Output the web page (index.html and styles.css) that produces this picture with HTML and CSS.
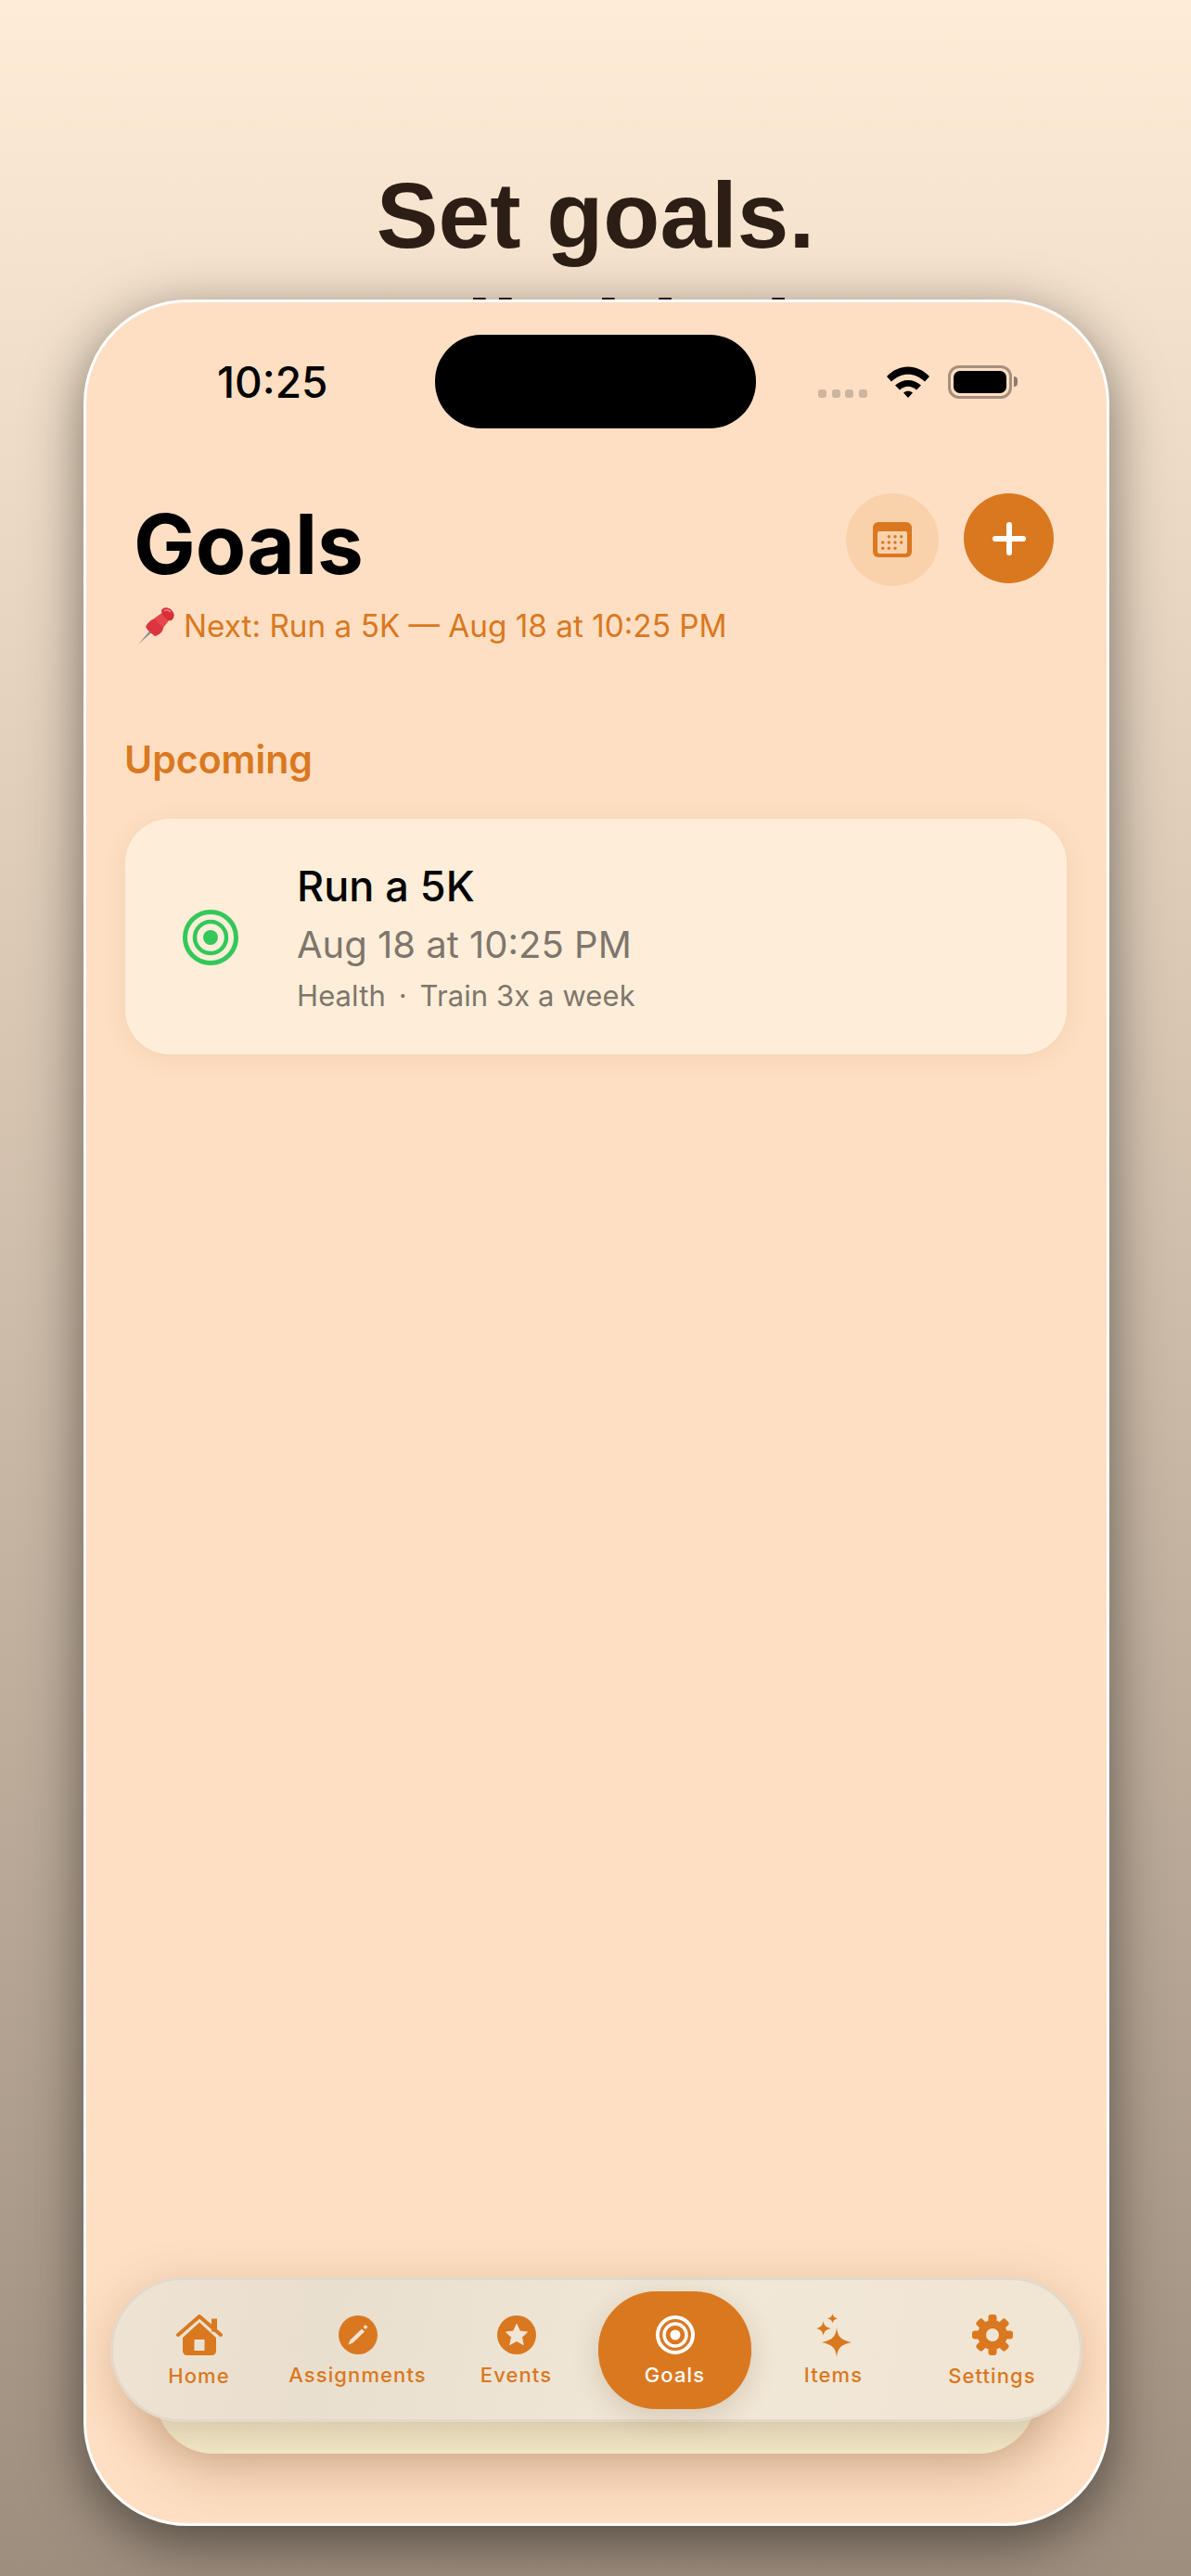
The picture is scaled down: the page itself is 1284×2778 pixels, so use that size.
FILE: index.html
```html
<!DOCTYPE html>
<html>
<head>
    <title>Goals</title>
    <link rel="stylesheet" href="styles.css">
</head>
<body>
    <div class="headline">
        <h1>Set goals.</h1>
        <h1>Actually hit them.</h1>
    </div>

    <div class="phone">
        <div class="status">
            <span class="time">10:25</span>
            <div class="island"></div>
            <div class="status-icons">
                <div class="signal"><i></i><i></i><i></i><i></i></div>
                <svg class="wifi" width="46" height="34" viewBox="0 0 46 34">
                    <path d="M0 11C13 -3 33 -3 46 11L41 16.500C30 6 16 6 5 16.500Z"/>
                    <path d="M9 20.500C17 13 29 13 37 20.500L32 25.500C26 20.500 20 20.500 14 25.500Z"/>
                    <path d="M18 28.500C21 26 25 26 28 28.500L23 34Z"/>
                </svg>
                <div class="battery"><div class="battery-fill"></div></div>
                <div class="battery-cap"></div>
            </div>
        </div>

        <div class="header">
            <div>
                <div class="title">Goals</div>
                <div class="next">
                    <svg class="pin" width="40" height="40" viewBox="0 0 40 40">
                        <path d="M0 40L14 23.500L16 25.500Z" fill="#7f8c9c"/>
                        <path d="M8 21C11 15 17 11 21 12L27 20C28 25 23 30 18 31C14 28 10 25 8 21Z" fill="#dc3540"/>
                        <path d="M17 12L27 5L34 13L27 22Z" fill="#e5474d"/>
                        <path d="M25 3C28 -1 33 0 36 3C40 7 39 11 36 14C33 15 30 13 28 10C26 8 25 6 25 3Z" fill="#d92f38"/>
                        <path d="M28 4C30 2 33 3 35 5" fill="none" stroke="#f58a8a" stroke-width="1.500"/>
                    </svg>
                    <span>Next: Run a 5K — Aug 18 at 10:25 PM</span>
                </div>
            </div>
            <div class="header-btns">
                <div class="btn btn-cal">
                    <svg width="42" height="38" viewBox="0 0 42 38">
                        <rect width="42" height="38" rx="6" fill="#da7820"/>
                        <rect x="5" y="10" width="32" height="24" rx="2" fill="#f9d2ac"/>
                        <g fill="#da7820">
                            <circle cx="17.300" cy="15.700" r="1.700"/><circle cx="24" cy="15.700" r="1.700"/><circle cx="30.700" cy="15.700" r="1.700"/>
                            <circle cx="10.700" cy="22" r="1.700"/><circle cx="17.300" cy="22" r="1.700"/><circle cx="24" cy="22" r="1.700"/><circle cx="30.700" cy="22" r="1.700"/>
                            <circle cx="10.700" cy="28.300" r="1.700"/><circle cx="17.300" cy="28.300" r="1.700"/><circle cx="24" cy="28.300" r="1.700"/>
                        </g>
                    </svg>
                </div>
                <div class="btn btn-add">
                    <svg width="36" height="36" viewBox="0 0 36 36">
                        <path d="M18 3V33M3 18H33" stroke="#fff" stroke-width="6" stroke-linecap="round"/>
                    </svg>
                </div>
            </div>
        </div>

        <div class="section-label">Upcoming</div>

        <div class="card">
            <svg class="card-icon" width="60" height="60" viewBox="0 0 60 60">
                <circle cx="30" cy="30" r="27.500" fill="none" stroke="#34c759" stroke-width="5"/>
                <circle cx="30" cy="30" r="17" fill="none" stroke="#34c759" stroke-width="4.500"/>
                <circle cx="30" cy="30" r="8" fill="#34c759"/>
            </svg>
            <div class="card-text">
                <div class="card-title">Run a 5K</div>
                <div class="card-date">Aug 18 at 10:25 PM</div>
                <div class="card-meta">Health <span class="dot">·</span> Train 3x a week</div>
            </div>
        </div>

        <div class="peek-card"></div>

        <div class="tabbar">
            <div class="tab">
                <svg width="50" height="44" viewBox="0 0 50 44">
                    <path fill-rule="evenodd" d="M7 25L25 8.500L43 25V39Q43 44 38 44H12Q7 44 7 39ZM19.500 27V39H30.500V27Z"/>
                    <path d="M2 22L25 2L48 22" fill="none" stroke="#da7820" stroke-width="4" stroke-linecap="round" stroke-linejoin="round"/>
                    <rect x="38" y="4.500" width="6" height="14"/>
                </svg>
                <span>Home</span>
            </div>
            <div class="tab">
                <svg width="42" height="42" viewBox="0 0 42 42">
                    <circle cx="21" cy="21" r="21"/>
                    <path d="M10.500 31.500L12.500 26.500L25 14.500L28 17.500L15.500 29.500Z" fill="#f1e6d6"/>
                    <circle cx="29" cy="12.500" r="2" fill="#f1e6d6"/>
                </svg>
                <span>Assignments</span>
            </div>
            <div class="tab">
                <svg width="42" height="42" viewBox="0 0 42 42">
                    <circle cx="21" cy="21" r="21"/>
                    <path d="M21 9.500L24.500 17L32.500 18L26.500 23.500L28.200 31.500L21 27.500L13.800 31.500L15.500 23.500L9.500 18L17.500 17Z" fill="#f1e6d6" stroke="#f1e6d6" stroke-width="1" stroke-linejoin="round"/>
                </svg>
                <span>Events</span>
            </div>
            <div class="tab tab-active">
                <svg width="42" height="42" viewBox="0 0 42 42" fill="none" stroke="#fff">
                    <circle cx="21" cy="21" r="19" stroke-width="4"/>
                    <circle cx="21" cy="21" r="12" stroke-width="3.500"/>
                    <circle cx="21" cy="21" r="5.500" fill="#fff" stroke="none"/>
                </svg>
                <span>Goals</span>
            </div>
            <div class="tab tab-items">
                <svg width="38" height="47" viewBox="0 0 38 47">
                    <path d="M22 15C23 25 26.500 28.500 38 31C26.500 33.500 23 37 22 47C21 37 17.500 33.500 6 31C17.500 28.500 21 25 22 15Z"/>
                    <path d="M7.600 8C8.300 12.700 10.800 15.200 16 16C10.800 16.800 8.300 19.300 7.600 24C6.900 19.300 4.400 16.800 0 16C4.400 15.200 6.900 12.700 7.600 8Z"/>
                    <path d="M17.600 0C18.100 2.900 19.900 4.700 23 5.300C19.900 5.900 18.100 7.700 17.600 10.600C17.100 7.700 15.300 5.900 12 5.300C15.300 4.700 17.100 2.900 17.600 0Z"/>
                </svg>
                <span>Items</span>
            </div>
            <div class="tab">
                <svg width="44" height="44" viewBox="-22 -22 44 44">
                    <circle r="11.500" fill="none" stroke="#da7820" stroke-width="9"/>
                    <rect x="-4.500" y="-22" width="9" height="10" rx="3"/>
                    <rect x="-4.500" y="-22" width="9" height="10" rx="3" transform="rotate(45)"/>
                    <rect x="-4.500" y="-22" width="9" height="10" rx="3" transform="rotate(90)"/>
                    <rect x="-4.500" y="-22" width="9" height="10" rx="3" transform="rotate(135)"/>
                    <rect x="-4.500" y="-22" width="9" height="10" rx="3" transform="rotate(180)"/>
                    <rect x="-4.500" y="-22" width="9" height="10" rx="3" transform="rotate(225)"/>
                    <rect x="-4.500" y="-22" width="9" height="10" rx="3" transform="rotate(270)"/>
                    <rect x="-4.500" y="-22" width="9" height="10" rx="3" transform="rotate(315)"/>
                </svg>
                <span>Settings</span>
            </div>
        </div>
    </div>
</body>
</html>
```

FILE: styles.css
```css
html, body {
    height: 100%;
}
body {
    margin: 0;
    height: 2778px;
    overflow: hidden;
    background: linear-gradient(180deg, #ffecd6 0%, #9e8e7e 100%);
    font-family: "Inter", "Liberation Sans", sans-serif;
}

.headline {
    padding-top: 169px;
    height: 154px;
    text-align: center;
    font-family: "Liberation Sans", sans-serif;
}
.headline h1 {
    margin: 0;
    font-size: 100px;
    line-height: 127px;
    font-weight: 700;
    color: #2c1e15;
}

/* phone body */
.phone {
    position: relative;
    z-index: 1;
    box-sizing: border-box;
    width: 1106px;
    height: 2401px;
    margin: 0 0 0 90px;
    border: 3px solid #fff;
    border-radius: 112px;
    background: #fedfc3;
    box-shadow: 0 16px 60px rgba(0, 0, 0, 0.5);
    overflow: hidden;
}

.status {
    display: flex;
    align-items: center;
    height: 101px;
    margin-top: 35px;
    padding-left: 141px;
}
.time {
    width: 235px;
    font-size: 46px;
    font-weight: 500;
    color: #000;
}
.island {
    width: 346px;
    height: 101px;
    border-radius: 50px;
    background: #000;
}
.status-icons {
    display: flex;
    align-items: center;
    margin-left: 67px;
}
.signal {
    display: flex;
    gap: 5.5px;
    margin-top: 25px;
    margin-right: 21px;
}
.signal i {
    width: 9px;
    height: 9px;
    border-radius: 3px;
    background: #cdb5a0;
}
.wifi {
    fill: #000;
    margin-right: 20px;
}
.battery {
    box-sizing: border-box;
    width: 69px;
    height: 36px;
    padding: 3px;
    border: 3px solid #a68f7c;
    border-radius: 12px;
}
.battery-fill {
    height: 100%;
    border-radius: 7px;
    background: #000;
}
.battery-cap {
    width: 4px;
    height: 11px;
    margin-left: 2px;
    border-radius: 0 6px 6px 0;
    background: #8f7a68;
}

.header {
    display: flex;
    justify-content: space-between;
    margin-top: 72px;
    padding: 0 57px 0 51px;
}
.title {
    font-size: 89px;
    font-weight: 700;
    line-height: 106px;
    color: #000;
}
.next {
    display: flex;
    align-items: center;
    gap: 9px;
    height: 40px;
    margin-top: 15px;
    padding-left: 5px;
    font-size: 33.3px;
    color: #da7820;
}
.header-btns {
    display: flex;
    align-items: flex-start;
    gap: 27px;
    margin-top: -2px;
}
.btn {
    display: flex;
    align-items: center;
    justify-content: center;
    width: 100px;
    height: 100px;
    border-radius: 50%;
}
.btn-cal {
    background: #f9d2ac;
}
.btn-add {
    width: 97px;
    height: 97px;
    background: #da7820;
}

.section-label {
    margin: 100px 0 0 41px;
    font-size: 41px;
    font-weight: 600;
    line-height: 48px;
    color: #da7820;
}

.card {
    display: flex;
    align-items: center;
    box-sizing: border-box;
    width: 1015px;
    height: 254px;
    margin: 40px 0 0 42px;
    padding: 2px 0 0 62px;
    border-radius: 48px;
    background: #feeed9;
    box-shadow: 0 4px 24px rgba(160, 90, 30, 0.1);
}
.card-icon {
    flex: none;
}
.card-text {
    margin-left: 63px;
}
.card-title {
    font-size: 45px;
    font-weight: 500;
    line-height: 54px;
    color: #000;
}
.card-date {
    margin-top: 10px;
    font-size: 40px;
    line-height: 52px;
    color: #7e766c;
}
.card-meta {
    margin-top: 9px;
    font-size: 31px;
    line-height: 40px;
    letter-spacing: 0.1px;
    color: #7e766c;
}
.dot {
    margin: 0 5px;
}

/* floating bits at the bottom of the phone */
.peek-card {
    position: absolute;
    left: 75px;
    top: 2200px;
    width: 949px;
    height: 120px;
    border-radius: 0 0 62px 62px;
    background: linear-gradient(180deg, #dfd3b6 0%, #f4eccc 100%);
    box-shadow: 0 14px 60px rgba(110, 60, 20, 0.33);
}
.tabbar {
    position: absolute;
    left: 26px;
    top: 2130px;
    display: grid;
    grid-template-columns: repeat(6, 1fr);
    align-items: center;
    box-sizing: border-box;
    width: 1048px;
    height: 156px;
    padding: 0 9px 0 7px;
    border: 3px solid #e4d8ca;
    border-radius: 78px;
    background: linear-gradient(100deg, #efe3d4 0%, #e9dfce 22%, #f1e8d7 60%, #f1e5d3 100%);
    box-shadow: 0 10px 50px rgba(120, 70, 30, 0.22);
}
.tab {
    display: flex;
    flex-direction: column;
    align-items: center;
    gap: 8px;
    margin-top: 3px;
    font-size: 22px;
    font-weight: 500;
    letter-spacing: 1.1px;
    line-height: 28px;
    color: #da7820;
}
.tab svg {
    fill: #da7820;
}
.tab-active {
    box-sizing: border-box;
    justify-content: center;
    height: 127px;
    margin: 0 3px;
    padding-top: 3px;
    border-radius: 62px;
    background: #da7820;
    color: #fff;
    box-shadow: 0 8px 30px rgba(90, 60, 20, 0.18);
}
.tab-active svg {
    fill: none;
}
.tab-items {
    gap: 5px;
    margin-top: 2px;
}
```
